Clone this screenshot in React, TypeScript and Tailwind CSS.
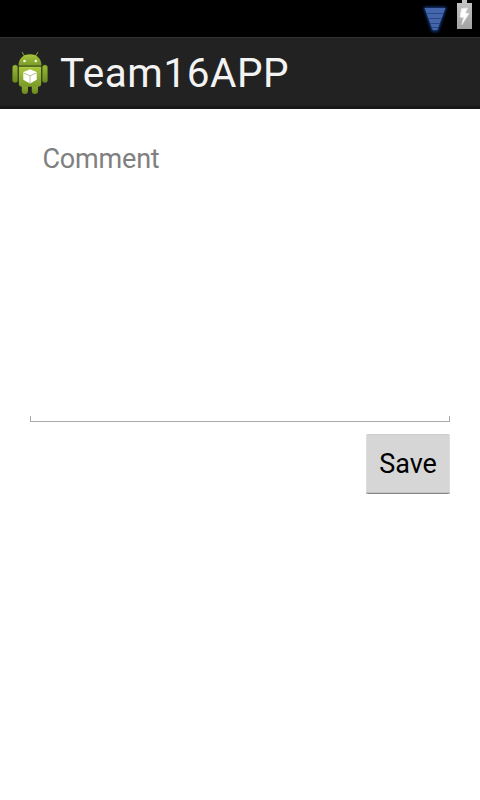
function SignalIcon() {
  return (
    <svg className="block h-[37px] w-[34px] overflow-visible" viewBox="0 0 34 37">
      <defs>
        <filter id="glow" x="-30%" y="-30%" width="160%" height="160%">
          <feGaussianBlur stdDeviation="1.4" />
        </filter>
      </defs>
      <path d="M3.500 7H26.500L18 31.500H12Z" fill="#1b418c" filter="url(#glow)" />
      <path d="M4.500 8H25.500L17.300 30H12.700Z" fill="#4366ad" />
      <path d="M6.500 13.500H23.500M8.500 18.500H21.500M10 23.500H20M12 27.500H18" stroke="#2b4783" strokeWidth="1" />
    </svg>
  );
}

function BatteryIcon() {
  return (
    <svg className="block h-[37px] w-4" viewBox="0 0 16 37">
      <defs>
        <linearGradient id="battery" x1="0" x2="0" y1="0" y2="1">
          <stop offset="0" stopColor="#c6c6c6" />
          <stop offset="1" stopColor="#a2a2a2" />
        </linearGradient>
      </defs>
      <path d="M5 0H10V3H15V29H0V3H5Z" fill="url(#battery)" />
      <path d="M4.500 8.500L10.500 8L8.500 13L12 13.500L5 24.500L6.500 17.500L3 17Z" fill="#fff" stroke="#e6e6e6" strokeWidth="1" strokeLinejoin="round" />
    </svg>
  );
}

function AndroidIcon() {
  return (
    <svg className="block h-[48px] w-[40px]" viewBox="0 0 40 48">
      <defs>
        <linearGradient id="body" x1="0" x2="0" y1="0" y2="1">
          <stop offset="0" stopColor="#a9c63c" />
          <stop offset="1" stopColor="#799a27" />
        </linearGradient>
        <linearGradient id="limb" x1="0" x2="0" y1="0" y2="1">
          <stop offset="0" stopColor="#9abb36" />
          <stop offset="1" stopColor="#6b8820" />
        </linearGradient>
      </defs>
      <path d="M14.500 8L12.300 4.500M25.500 8L27.700 4.500" stroke="#77922c" strokeWidth="1.200" strokeLinecap="round" />
      <rect x="11.800" y="33" width="6.200" height="13" rx="3" fill="url(#limb)" />
      <rect x="21.800" y="33" width="6.200" height="13" rx="3" fill="url(#limb)" />
      <rect x="2.500" y="17" width="5.200" height="17.500" rx="2.500" fill="url(#limb)" stroke="#607820" strokeWidth=".5" />
      <rect x="32.300" y="17" width="5.200" height="17.500" rx="2.500" fill="url(#limb)" stroke="#607820" strokeWidth=".5" />
      <path d="M8.500 17.800C8.500 11 13 6.300 20 6.300S31.500 11 31.500 17.800Z" fill="url(#body)" />
      <path d="M8.800 18.500H31.200V35.500Q31.200 38.800 28 38.800H12Q8.800 38.800 8.800 35.500Z" fill="url(#body)" />
      <path d="M9 18.300H31" stroke="#435817" strokeWidth="1" />
      <path d="M9.500 19.300H30.500" stroke="#b1cd48" strokeWidth=".7" />
      <circle cx="14.500" cy="13" r="1.300" fill="#f4f7e9" />
      <circle cx="25.800" cy="13" r="1.300" fill="#f4f7e9" />
      <path d="M20 21.200L26.700 24V31.800L20 35.500L13.300 31.800V24Z" fill="#fff" />
      <path d="M13.500 25L20 27.700L26.500 25M20 27.700V35" fill="none" stroke="#91a65e" strokeWidth=".7" />
    </svg>
  );
}

export default function App() {
  return (
    <div className="flex h-[800px] w-[480px] flex-col overflow-hidden bg-white font-[Roboto,'Noto_Sans',sans-serif]">
      <div className="flex h-[37px] shrink-0 justify-end gap-[3px] bg-black pr-[7px]">
        <SignalIcon />
        <BatteryIcon />
      </div>
      <header className="flex h-[72px] shrink-0 items-center border-t border-b-3 border-t-[#333333] border-b-[#191719] bg-[#222222] pl-[10px]">
        <AndroidIcon />
        <h1 className="mt-[2px] ml-[10px] text-[40.5px] leading-[48px] font-normal tracking-[0.55px] whitespace-nowrap text-[#f3f3f3]">Team16APP</h1>
      </header>
      <main className="flex flex-col px-[30px] pt-[30px]">
        <div className="h-[277px] pt-1 pl-[12.5px] text-[27px] leading-8 font-normal tracking-[-0.2px] text-[#808080]">Comment</div>
        <div className="h-[6px] border-x border-b border-[#aaaaaa]" />
        <button className="mt-3 h-[60px] w-[84px] self-end rounded-[2px] border-t border-b border-t-[#cccccc] border-b-[#858585] bg-[#d6d6d6] text-[27px] leading-8 font-normal text-black shadow-[inset_1px_0_#dedede,inset_-1px_0_#dedede,inset_0_-1px_#c4c4c4]">Save</button>
      </main>
    </div>
  );
}
